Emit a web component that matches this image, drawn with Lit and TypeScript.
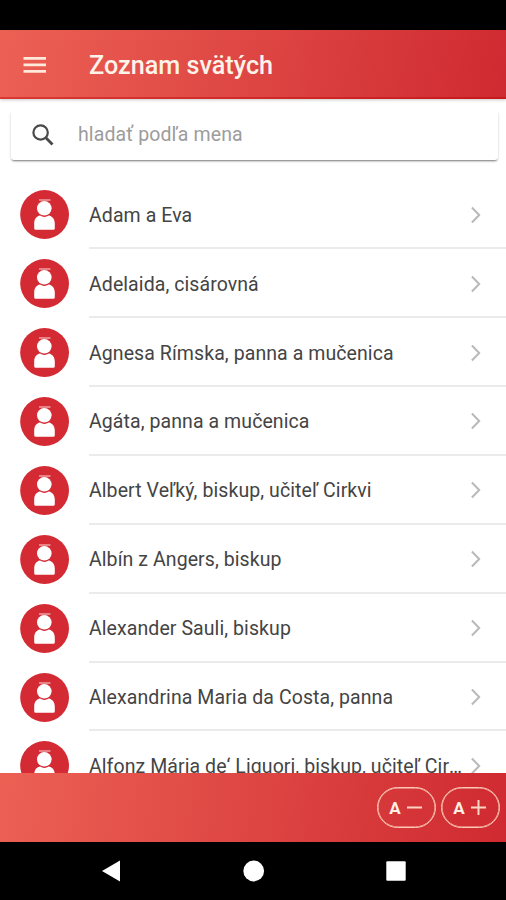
import { LitElement, html, css, svg } from "lit";
import { customElement, property } from "lit/decorators.js";

const SAINTS = [
  "Adam a Eva",
  "Adelaida, cisárovná",
  "Agnesa Rímska, panna a mučenica",
  "Agáta, panna a mučenica",
  "Albert Veľký, biskup, učiteľ Cirkvi",
  "Albín z Angers, biskup",
  "Alexander Sauli, biskup",
  "Alexandrina Maria da Costa, panna",
  "Alfonz Mária de‘ Liguori, biskup, učiteľ Cirkvi",
];

@customElement("saint-row")
export class SaintRow extends LitElement {
  @property() name = "";

  static styles = css`
    :host {
      display: flex;
      height: 68.9px;
      flex: none;
      padding-left: 20px;
      box-sizing: border-box;
    }
    .avatar {
      flex: none;
      width: 49px;
      height: 49px;
      margin: 10px 20px 0 0;
    }
    .content {
      flex: 1;
      min-width: 0;
      display: flex;
      align-items: center;
      box-sizing: border-box;
      border-bottom: 2px solid #ebebeb;
      padding-right: 23px;
    }
    .name {
      flex: 1;
      min-width: 0;
      overflow: hidden;
      text-overflow: ellipsis;
      white-space: nowrap;
      font-size: 19.5px;
      line-height: 28px;
      letter-spacing: 0.08px;
      color: #444;
      padding-top: 4px;
    }
    .chevron {
      flex: none;
      width: 12px;
      height: 20px;
      margin-top: 2px;
    }
  `;

  render() {
    return html`
      <svg class="avatar" viewBox="0 0 49 49">
        <circle cx="24.6" cy="24.5" r="24.4" fill="#d32a33" />
        <path d="M19 10H30.5" stroke="#efa9ac" stroke-width="1.4" />
        <circle cx="24.3" cy="18.3" r="7.3" fill="#fff" />
        <path
          d="M14.2 38.3V33.5C14.2 29 16.5 26.2 20 25.5Q24.4 28.3 28.8 25.5C32.3 26.2 34.8 29 34.8 33.5V38.3Q34.8 39.8 33.3 39.8H15.7Q14.2 39.8 14.2 38.3Z"
          fill="#fff"
        />
      </svg>
      <div class="content">
        <span class="name">${this.name}</span>
        <svg class="chevron" viewBox="0 0 12 20" fill="none">
          <path d="M0.9 2.5L8.2 10L0.9 17.5" stroke="#b9b9b9" stroke-width="2" />
        </svg>
      </div>
    `;
  }
}

@customElement("app-root")
export class AppRoot extends LitElement {
  static styles = css`
    :host {
      display: flex;
      flex-direction: column;
      width: 506px;
      height: 900px;
      overflow: hidden;
      background: #fff;
      font-family: Roboto, "Liberation Sans", sans-serif;
    }
    .status {
      flex: none;
      height: 30px;
      background: #000;
    }
    .bar {
      flex: none;
      height: 69px;
      display: flex;
      align-items: center;
      box-sizing: border-box;
      background: linear-gradient(98deg, #ec6054 0%, #dc4341 55%, #cf2a31 100%);
    }
    .header {
      box-shadow: inset 0 -2px 0 rgba(190, 0, 0, 0.4), 0 1px 3px rgba(0, 0, 0, 0.22);
      padding-left: 23px;
    }
    .menu {
      width: 24px;
      height: 18px;
      margin-right: 42px;
    }
    .title {
      margin: 0;
      font-size: 25.2px;
      font-weight: 500;
      line-height: 32px;
      color: #fdf3e9;
      padding-top: 2px;
    }
    .search {
      flex: none;
      height: 49px;
      margin: 12px 8px 0 11px;
      display: flex;
      align-items: center;
      box-sizing: border-box;
      padding: 0 0 2px 20px;
      border-radius: 0 0 3px 3px;
      box-shadow: 0 2px 2px -1px rgba(0, 0, 0, 0.45), 0 1px 3px rgba(0, 0, 0, 0.14);
      clip-path: inset(0 -5px -6px -5px);
    }
    .lens {
      width: 24px;
      height: 24px;
      margin-right: 23px;
    }
    .placeholder {
      font-size: 19.5px;
      letter-spacing: 0.12px;
      color: #9c9c9c;
    }
    .list {
      flex: 1;
      min-height: 0;
      overflow: hidden;
      display: flex;
      flex-direction: column;
      padding-top: 20.3px;
    }
    .footer {
      justify-content: flex-end;
      gap: 5px;
      padding-right: 6px;
    }
    .pill {
      width: 59px;
      height: 41px;
      display: flex;
      align-items: center;
      justify-content: center;
      gap: 5px;
      box-sizing: border-box;
      border: 1px solid #fbc8b5;
      box-shadow: inset 0 0 0 0.5px #fbc8b5;
      border-radius: 21px;
      color: #fdf0e4;
      font-size: 17px;
      font-weight: 700;
      padding-right: 1px;
    }
    .sign {
      width: 17px;
      height: 17px;
    }
    .nav {
      flex: none;
      height: 58px;
      background: #000;
      display: flex;
      align-items: center;
      justify-content: space-between;
      box-sizing: border-box;
      padding: 0 99px 0 100px;
    }
    .key {
      width: 22px;
      height: 22px;
      fill: #fff;
    }
  `;

  private pill(plus: boolean) {
    return html`<div class="pill">
      <span>A</span>
      <svg class="sign" viewBox="0 0 17 17" stroke="#fbd5c3" stroke-width="2">
        <path d="M1 8.5H16" />
        ${plus ? svg`<path d="M8.5 1V16" />` : ""}
      </svg>
    </div>`;
  }

  render() {
    return html`
      <div class="status"></div>
      <header class="bar header">
        <svg class="menu" viewBox="0 0 24 18" fill="#ffe9da">
          <path d="M0.5 1H23V3.8H0.5ZM0.5 7.5H23V10.3H0.5ZM0.5 14H23V16.8H0.5Z" />
        </svg>
        <h1 class="title">Zoznam svätých</h1>
      </header>
      <div class="search">
        <svg class="lens" viewBox="0 0 24 24" fill="none" stroke="#4a4a4a">
          <circle cx="9.6" cy="9.5" r="7.2" stroke-width="2.2" />
          <path d="M14.6 14.5L21.5 21.4" stroke-width="2.8" />
        </svg>
        <span class="placeholder">hladať podľa mena</span>
      </div>
      <main class="list">
        ${SAINTS.map((name) => html`<saint-row .name=${name}></saint-row>`)}
      </main>
      <footer class="bar footer">${this.pill(false)}${this.pill(true)}</footer>
      <nav class="nav">
        <svg class="key" viewBox="0 0 22 22"><path d="M2 11L20 0.5V21.5Z" /></svg>
        <svg class="key" viewBox="0 0 22 22"><circle cx="10.7" cy="11" r="10.4" /></svg>
        <svg class="key" viewBox="0 0 22 22"><rect x="1.3" y="1.3" width="19.4" height="19.4" rx="1" /></svg>
      </nav>
    `;
  }
}
